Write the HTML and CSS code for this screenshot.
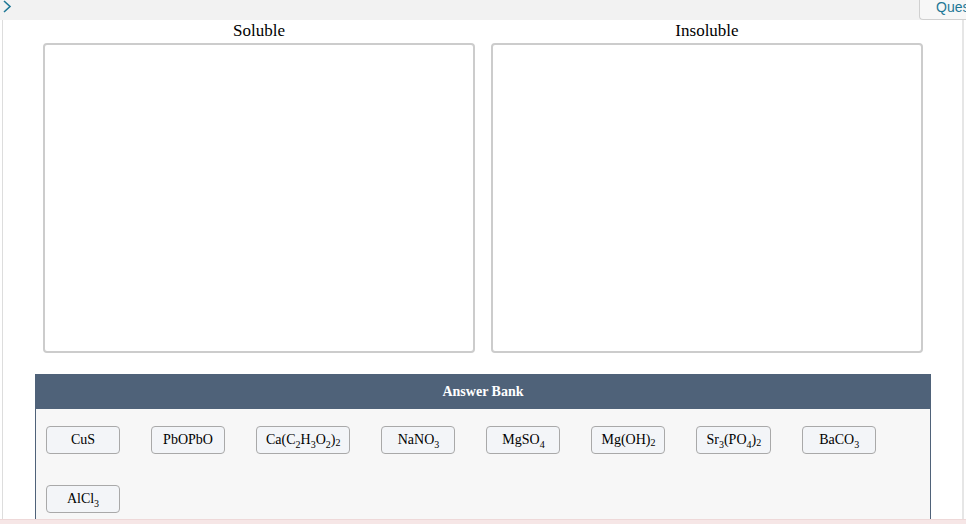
FILE: index.html
```
<!DOCTYPE html>
<html lang="en">
<head>
    <meta charset="UTF-8">
    <title>Soluble or Insoluble</title>
    <link rel="stylesheet" href="styles.css">
</head>
<body>
    <div class="topbar">
        <svg class="chevron" width="12" height="14" viewBox="0 0 12 14">
            <polyline points="3,1 9,6.5 3,12" fill="none" stroke="#1f7896" stroke-width="1.6"/>
        </svg>
        <div class="question-tab">Ques</div>
    </div>

    <div class="page">
        <div class="bins">
            <div class="bin">
                <div class="bin-label">Soluble</div>
                <div class="bin-box"></div>
            </div>
            <div class="bin">
                <div class="bin-label">Insoluble</div>
                <div class="bin-box"></div>
            </div>
        </div>

        <div class="answer-bank">
            <div class="bank-header">Answer Bank</div>
            <div class="bank-body">
                <button class="chip">CuS</button>
                <button class="chip">PbOPbO</button>
                <button class="chip">Ca(C<sub>2</sub>H<sub>3</sub>O<sub>2</sub>)<sub class="low">2</sub></button>
                <button class="chip">NaNO<sub>3</sub></button>
                <button class="chip">MgSO<sub>4</sub></button>
                <button class="chip">Mg(OH)<sub class="low">2</sub></button>
                <button class="chip">Sr<sub>3</sub>(PO<sub>4</sub>)<sub class="low">2</sub></button>
                <button class="chip">BaCO<sub>3</sub></button>
                <button class="chip">AlCl<sub>3</sub></button>
            </div>
        </div>
    </div>

    <div class="footer-strip"></div>
</body>
</html>
```

FILE: styles.css
```
* {
    margin: 0;
    padding: 0;
    box-sizing: border-box;
}

html, body {
    height: 100%;
    overflow: hidden;
}

body {
    background-color: #ffffff;
    font-family: "Liberation Serif", "Times New Roman", serif;
    color: #000000;
}

.topbar {
    position: relative;
    height: 20px;
    background-color: #f2f2f2;
}

.chevron {
    display: block;
    margin-left: 1px;
}

.question-tab {
    position: absolute;
    left: 919px;
    right: 0;
    top: -4px;
    height: 24px;
    padding: 2px 0 0 16px;
    background-color: #f7f7f7;
    border: 1px solid #d0d0d0;
    border-right: none;
    border-radius: 0 0 0 4px;
    color: #1f7896;
    font-family: "Liberation Sans", Arial, sans-serif;
    font-size: 14px;
    white-space: nowrap;
}

.page {
    margin-left: 2px;
    width: 962px;
    height: 504px;
    border-left: 1px solid #dddddd;
    border-right: 2px solid #e6e6e6;
}

.bins {
    display: flex;
    gap: 16px;
    padding: 1px 0 0 40px;
}

.bin {
    width: 432px;
}

.bin-label {
    text-align: center;
    font-size: 17px;
    line-height: 20px;
    margin-bottom: 2px;
}

.bin-box {
    height: 310px;
    border: 2px solid #cccccc;
    border-radius: 4px;
    background-color: #ffffff;
}

.answer-bank {
    margin: 21px 0 0 32px;
    width: 896px;
}

.bank-header {
    height: 35px;
    background-color: #4f6279;
    color: #ffffff;
    font-weight: bold;
    font-size: 14px;
    line-height: 35px;
    text-align: center;
}

.bank-body {
    display: flex;
    flex-wrap: wrap;
    align-content: flex-start;
    column-gap: 31px;
    row-gap: 31px;
    padding: 17px 10px 10px 10px;
    height: 120px;
    background-color: #f7f7f7;
    border-left: 1px solid #4f6279;
    border-right: 1px solid #4f6279;
}

.chip {
    min-width: 74px;
    height: 28px;
    padding: 0 9px;
    background-color: #f3f5f8;
    border: 1px solid #a9a9a9;
    border-radius: 4px;
    font-family: "Liberation Serif", "Times New Roman", serif;
    font-size: 14px;
    color: #000000;
    line-height: 1;
}

.chip sub {
    font-size: 10px;
    vertical-align: -4px;
    line-height: 0;
}

.chip sub.low {
    vertical-align: -2px;
}

.footer-strip {
    position: fixed;
    left: 0;
    right: 0;
    bottom: 0;
    height: 5px;
    background-color: #f6e6e6;
    border-top: 1px solid #eed8d8;
}
```
